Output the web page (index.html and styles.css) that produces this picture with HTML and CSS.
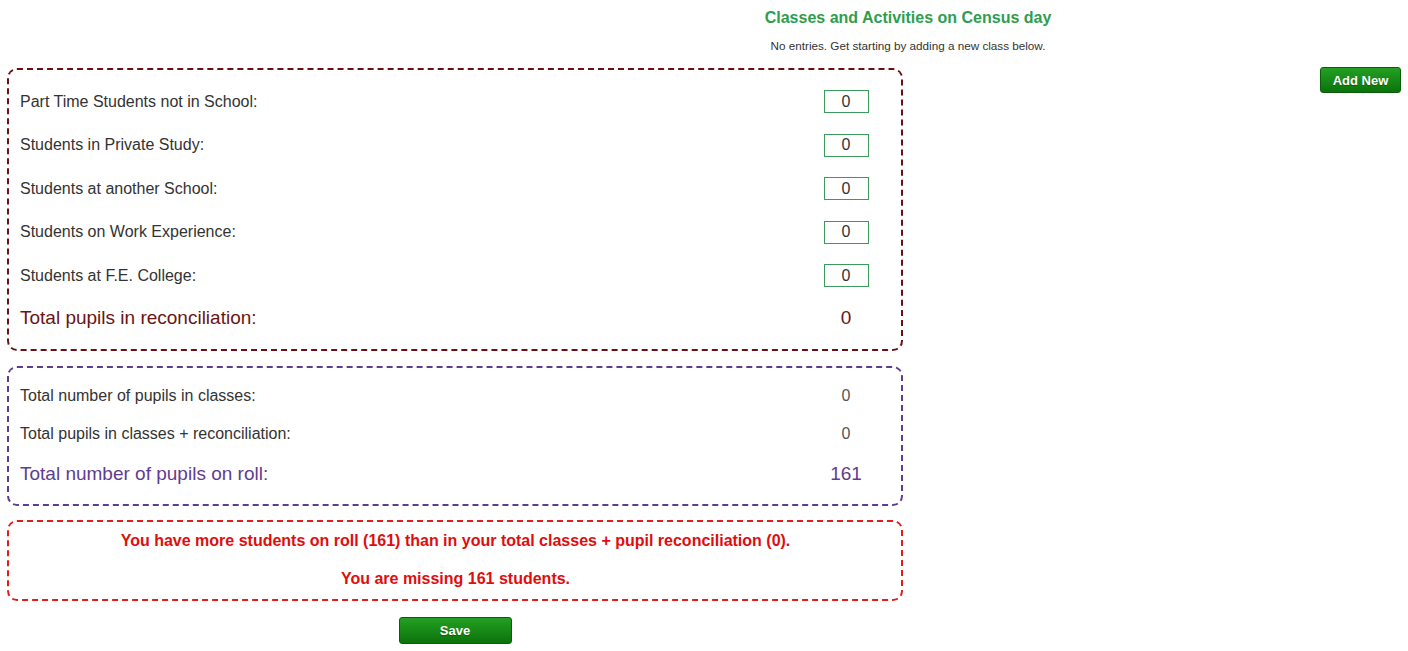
FILE: index.html
```html
<!DOCTYPE html>
<html lang="en">
<head>
    <meta charset="UTF-8">
    <title>Census Day Reconciliation</title>
    <link rel="stylesheet" href="styles.css">
</head>
<body>
    <div class="header">
        <h2 class="title">Classes and Activities on Census day</h2>
        <p class="note">No entries. Get starting by adding a new class below.</p>
    </div>

    <div class="main">
        <div class="left">
            <div class="box box-recon">
                <div class="row">
                    <span class="label">Part Time Students not in School:</span>
                    <span class="value"><input type="text" class="count" value="0"></span>
                </div>
                <div class="row">
                    <span class="label">Students in Private Study:</span>
                    <span class="value"><input type="text" class="count" value="0"></span>
                </div>
                <div class="row">
                    <span class="label">Students at another School:</span>
                    <span class="value"><input type="text" class="count" value="0"></span>
                </div>
                <div class="row">
                    <span class="label">Students on Work Experience:</span>
                    <span class="value"><input type="text" class="count" value="0"></span>
                </div>
                <div class="row">
                    <span class="label">Students at F.E. College:</span>
                    <span class="value"><input type="text" class="count" value="0"></span>
                </div>
                <div class="row total-row recon-total">
                    <span class="label">Total pupils in reconciliation:</span>
                    <span class="value">0</span>
                </div>
            </div>

            <div class="box box-roll">
                <div class="row small-row">
                    <span class="label">Total number of pupils in classes:</span>
                    <span class="value">0</span>
                </div>
                <div class="row small-row">
                    <span class="label">Total pupils in classes + reconciliation:</span>
                    <span class="value">0</span>
                </div>
                <div class="row total-row roll-total">
                    <span class="label">Total number of pupils on roll:</span>
                    <span class="value">161</span>
                </div>
            </div>

            <div class="box box-warn">
                <p>You have more students on roll (161) than in your total classes + pupil reconciliation (0).</p>
                <p>You are missing 161 students.</p>
            </div>

            <div class="actions">
                <button class="btn btn-save">Save</button>
            </div>
        </div>

        <div class="right">
            <button class="btn btn-add">Add New</button>
        </div>
    </div>
</body>
</html>
```

FILE: styles.css
```css
body {
    font-family: Arial, "Liberation Sans", sans-serif;
    margin: 0;
    color: #333;
}
.header {
    margin-left: 408px;
    text-align: center;
    height: 68px;
}
.title {
    margin: 0;
    padding-top: 9px;
    font-size: 16px;
    line-height: 18px;
    color: #2e9e4e;
}
.note {
    margin: 12px 0 0;
    font-size: 11.7px;
    line-height: 13px;
}
.main {
    display: flex;
    justify-content: space-between;
}
.left {
    width: 896px;
    margin-left: 7px;
}
.right {
    margin-right: 7px;
    padding-top: 0;
}
.box {
    border: 2px dashed;
    border-radius: 10px;
    padding: 10px 10px 10px 11px;
}
.box-recon {
    border-color: #6b0f12;
}
.box-roll {
    margin-top: 15px;
    padding-top: 9px;
    padding-bottom: 9px;
    border-color: #5e3d91;
}
.box-warn {
    margin-top: 14px;
    padding-top: 10px;
    padding-bottom: 11px;
    border-color: #e21c1c;
    text-align: center;
    color: #e00d0d;
    font-weight: bold;
    font-size: 16px;
    line-height: 18px;
}
.box-warn p {
    margin: 0;
}
.box-warn p + p {
    margin-top: 20px;
}
.row {
    display: grid;
    grid-template-columns: 1fr 90px;
    align-items: center;
    height: 43.5px;
    font-size: 16px;
}
.small-row {
    height: 38px;
    font-size: 16px;
}
.small-row .value {
    color: #555;
}
.total-row {
    height: 41px;
    font-size: 19px;
}
.box-roll .total-row {
    height: 42px;
}
.recon-total {
    color: #6b1414;
}
.roll-total {
    color: #5e3d91;
}
.value {
    text-align: center;
}
.count {
    width: 45px;
    height: 23px;
    box-sizing: border-box;
    border: 1px solid #3c9a5c;
    padding: 0;
    text-align: center;
    font-family: Arial, "Liberation Sans", sans-serif;
    font-size: 16px;
    color: #333;
}
.actions {
    text-align: center;
    margin-top: 16px;
}
.btn {
    border: 1px solid #0b5c0b;
    border-radius: 3px;
    background: linear-gradient(#23a023, #0b730b);
    color: #fff;
    font-family: Arial, "Liberation Sans", sans-serif;
    font-weight: bold;
    font-size: 13px;
    line-height: 15px;
    padding: 0;
    cursor: pointer;
    text-shadow: 0 1px 1px rgba(0, 0, 0, 0.3);
}
.btn:hover {
    background: #0b730b;
}
.btn-save {
    width: 113px;
    height: 27px;
}
.btn-add {
    width: 81px;
    height: 26px;
    margin-top: -1px;
}
```
